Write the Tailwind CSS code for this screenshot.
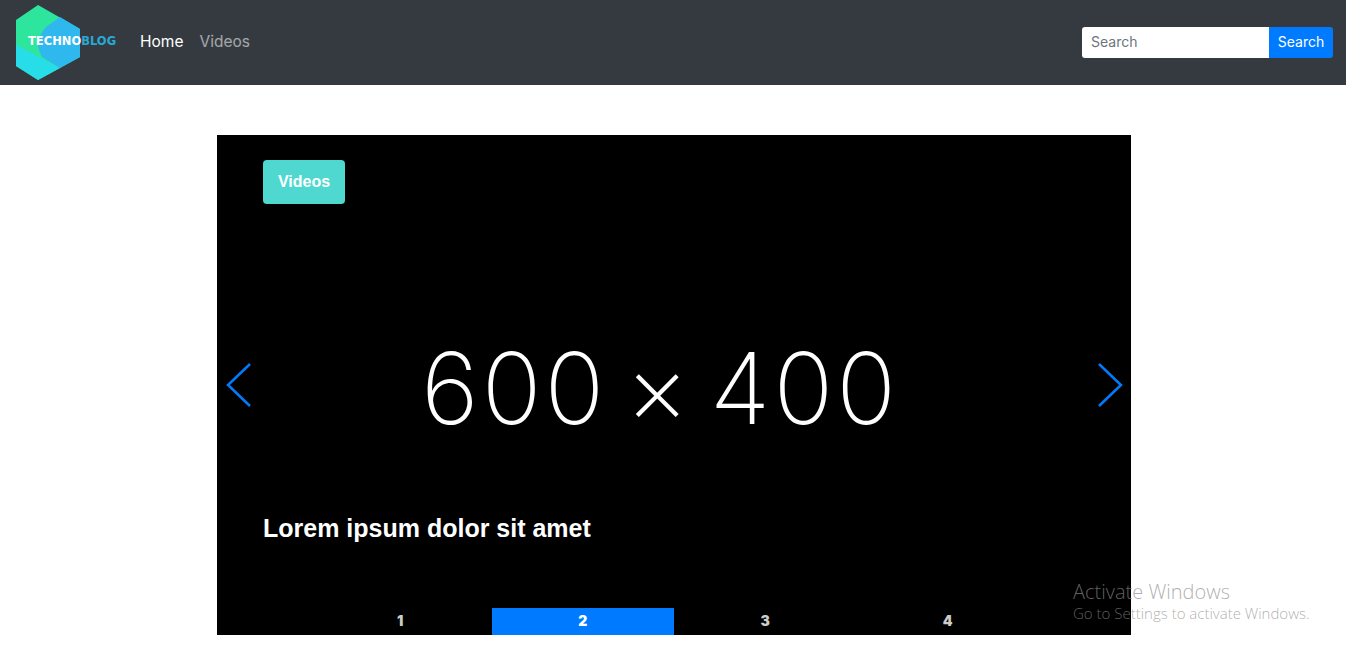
<!DOCTYPE html>
<html lang="en">
  <head>
    <meta charset="UTF-8" />
    <title>TechnoBlog</title>
    <script src="https://cdn.jsdelivr.net/npm/@tailwindcss/browser@4"></script>
  </head>
<body class="bg-white font-['Inter',sans-serif] h-[651px] overflow-hidden relative">
  <!-- navbar -->
  <nav class="h-[85px] bg-[#343a40] flex items-center pl-[16px] pr-[13px]">
    <a href="#" class="relative block w-[101px] h-[85px] shrink-0">
      <svg class="absolute left-0 top-0" width="66" height="85" viewBox="16 0 66 85">
        <polygon points="38,5 80,29 80,57 38,80 16,66 16,20" fill="#2ee59d" />
        <polygon points="16,45 60,68 38,80 16,66" fill="#27dde8" />
        <path d="M60,17 L80,29 L80,57 L60,68 L42,57 Q38,50 38,42 Q40,33 46,27 Z" fill="#2fb8ee" />
      </svg>
      <span class="absolute left-[12px] top-[34px] text-[11.5px] leading-[14px] font-bold whitespace-nowrap font-['DejaVu_Sans',sans-serif]"><span class="text-white">TECHNO</span><span class="text-[#2aa8d4]">BLOG</span></span>
    </a>
    <div class="flex items-center gap-[16px] ml-[23px] pb-[2px] text-[15.5px]">
      <a href="#" class="text-white">Home</a>
      <a href="#" class="text-white/55">Videos</a>
    </div>
    <form class="flex ml-auto h-[31px] text-[14px]">
      <input type="text" placeholder="Search" class="w-[187px] bg-white rounded-l-[3px] px-[9px] pb-[2px] placeholder:text-[#6c757d] outline-none" />
      <button type="button" class="w-[64px] bg-[#007bff] text-white rounded-r-[3px] pb-[2px]">Search</button>
    </form>
  </nav>

  <!-- carousel -->
  <section class="relative w-[914px] h-[500px] ml-[217px] mt-[50px] bg-black flex flex-col font-['Liberation_Sans',sans-serif]">
    <div class="pt-[25px] pl-[46px]">
      <a href="#" class="flex items-center justify-center w-[82px] h-[44px] rounded-[4px] bg-[#4fd8d0] text-white font-bold text-[16px]">Videos</a>
    </div>
    <div class="mt-[124px] ml-[204px] h-[120px] leading-[120px] text-[99px] tracking-[3px] [word-spacing:-13px] font-[250] text-white whitespace-nowrap font-['Inter',sans-serif]">600 × 400</div>
    <h2 class="mt-[64px] pl-[46px] text-[25px] leading-[32px] font-bold text-white">Lorem ipsum dolor sit amet</h2>
    <div class="mt-auto ml-[92px] w-[730px] h-[27px] grid grid-cols-4 text-[14px] font-black font-['Inter',sans-serif] text-[#ccc]">
      <a href="#" class="flex items-center justify-center pb-[3px]">1</a>
      <a href="#" class="flex items-center justify-center pb-[3px] bg-[#007bff] text-white">2</a>
      <a href="#" class="flex items-center justify-center pb-[3px]">3</a>
      <a href="#" class="flex items-center justify-center pb-[3px]">4</a>
    </div>
    <svg class="absolute left-[9px] top-[228px]" width="26" height="44" viewBox="0 0 26 44" fill="none" stroke="#007bff" stroke-width="2.5">
      <path d="M24,1 L2,22 L24,43" />
    </svg>
    <svg class="absolute right-[8px] top-[228px]" width="26" height="44" viewBox="0 0 26 44" fill="none" stroke="#007bff" stroke-width="2.5">
      <path d="M2,1 L24,22 L2,43" />
    </svg>
  </section>

  <!-- windows watermark -->
  <div class="absolute left-[1073px] top-[578px] text-[rgba(140,140,140,0.7)] font-['Open_Sans',sans-serif] font-light pointer-events-none whitespace-nowrap">
    <div class="text-[20px] leading-[27px]">Activate Windows</div>
    <div class="text-[15px] leading-[16px]">Go to Settings to activate Windows.</div>
  </div>
</body>
</html>
